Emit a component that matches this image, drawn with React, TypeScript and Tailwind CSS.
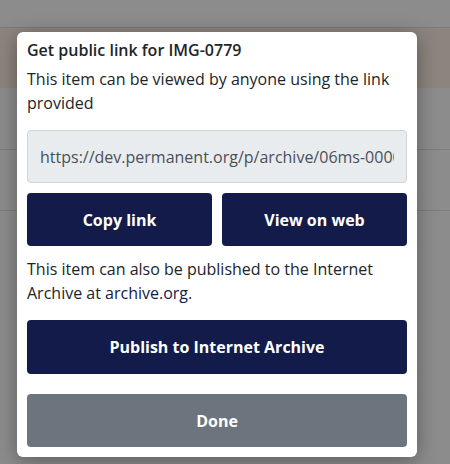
import React from "react";

export default function App() {
  return (
    <div className="relative w-[450px] h-[464px] overflow-hidden bg-white" style={{ fontFamily: '"Open Sans", sans-serif' }}>
      {/* underlying page */}
      <div className="flex flex-col">
        <div className="h-[28px] border-b border-[#e0e0e0] bg-white" />
        <div className="h-[60px] bg-[#fff1e3]" />
        <div className="h-[62px] border-b border-[#e4e4e4] bg-white" />
        <div className="h-[61px] border-b border-[#e4e4e4] bg-white" />
        <div className="h-[250px] bg-white" />
      </div>
      {/* backdrop */}
      <div className="absolute inset-0 bg-black/45" />
      {/* modal */}
      <div className="absolute left-[17px] top-[32px] w-[400px] h-[425px] bg-white rounded-[6px] shadow-[0_4px_20px_rgba(0,0,0,0.35)] px-[10px] pt-[6px] pb-[10px] flex flex-col text-[#212529]">
        <div className="text-[16px] leading-[24px] font-semibold">Get public link for IMG-0779</div>
        <p className="mt-[5px] text-[16px] leading-[24px]">This item can be viewed by anyone using the link provided</p>
        <input
          readOnly
          value="https://dev.permanent.org/p/archive/06ms-0000/0000"
          className="mt-[15px] h-[53px] w-full rounded-[4px] border border-[#ced4da] bg-[#e9ecef] px-[12px] text-[16px] text-[#495057] outline-none"
          style={{ fontFamily: '"Open Sans", sans-serif' }}
        />
        <div className="mt-[10px] flex gap-[10px]">
          <button className="flex-1 h-[53px] rounded-[4px] bg-[#131b4a] text-white font-bold text-[16px]">Copy link</button>
          <button className="flex-1 h-[53px] rounded-[4px] bg-[#131b4a] text-white font-bold text-[16px]">View on web</button>
        </div>
        <p className="mt-[11px] text-[16px] leading-[24px]">
          This item can also be published to the Internet Archive at <span className="text-[#131b4a]">archive.org</span>.
        </p>
        <button className="mt-[15px] h-[54px] rounded-[4px] bg-[#131b4a] text-white font-bold text-[16px]">Publish to Internet Archive</button>
        <button className="mt-[20px] h-[53px] rounded-[4px] bg-[#6c757d] text-white font-bold text-[16px]">Done</button>
      </div>
    </div>
  );
}
